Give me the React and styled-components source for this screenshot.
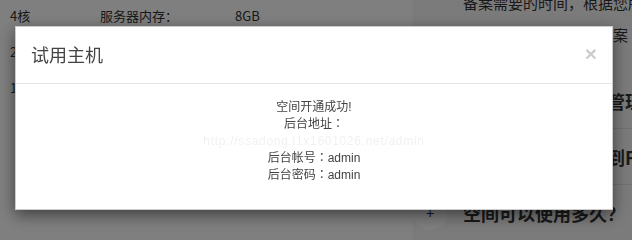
import React from "react";
import styled, { createGlobalStyle } from "styled-components";

const GlobalStyle = createGlobalStyle`
  html, body { margin: 0; padding: 0; background: #fff; overflow: hidden; }
  body { font-family: "Liberation Sans", "Noto Sans CJK SC", sans-serif; color: #333; }
  * { box-sizing: border-box; }
`;

const Page = styled.div`
  display: grid;
  grid-template-columns: 413px 1fr;
  height: 240px;
  overflow: hidden;
  background: #fff;
`;

const SpecTable = styled.div`
  display: flex;
  flex-direction: column;
  margin-top: -3px;
  padding-left: 10px;
`;

const SpecRow = styled.div`
  display: grid;
  grid-template-columns: 90px 135px 1fr;
  height: 36px;
  align-items: center;
  font-size: 13px;
  color: #333;
  font-family: "Noto Sans CJK SC", sans-serif;
`;

const FaqColumn = styled.div`
  display: flex;
  flex-direction: column;
  overflow: hidden;
  background: #f7f7f7;
`;

const Answer = styled.div`
  margin: -13px 0 22px 50px;
  font-size: 15px;
  line-height: 32px;
  color: #333;
  white-space: nowrap;
  font-family: "Noto Sans CJK SC", sans-serif;
`;

const AnswerLine = styled.div``;

const FaqItem = styled.div`
  display: flex;
  align-items: center;
  gap: 16px;
  height: 56px;
  flex: none;
  border-bottom: 1px solid ${(p) => (p.$last ? "#f7f7f7" : "#e2e2e2")};
  white-space: nowrap;
`;

const PlusCircle = styled.span`
  flex: none;
  width: 34px;
  height: 34px;
  border-radius: 50%;
  background: #fff;
  display: flex;
  align-items: center;
  justify-content: center;
  font-size: 14px;
  color: #1a2a66;
  font-family: "Liberation Sans", sans-serif;
`;

const Question = styled.span`
  font-size: 18px;
  font-weight: 700;
  color: #333;
  font-family: "Noto Sans CJK SC", sans-serif;
`;

const Backdrop = styled.div`
  position: fixed;
  inset: 0;
  background: rgba(0, 0, 0, 0.5);
  padding: 26px 0 0 15px;
`;

const Dialog = styled.div`
  width: 598px;
  background: #fff;
  border: 1px solid rgba(0, 0, 0, 0.2);
  box-shadow: 0 5px 15px rgba(0, 0, 0, 0.5);
`;

const Header = styled.div`
  display: flex;
  align-items: center;
  justify-content: space-between;
  padding: 15px;
  border-bottom: 1px solid #e5e5e5;
`;

const Title = styled.h4`
  margin: 0;
  font-size: 18px;
  font-weight: 400;
  line-height: 1.42857;
  color: #444;
  font-family: "Noto Sans CJK SC", sans-serif;
`;

const Close = styled.button`
  padding: 0;
  margin-top: -2px;
  border: 0;
  background: none;
  font-family: "Liberation Sans", sans-serif;
  font-size: 21px;
  font-weight: 700;
  line-height: 1;
  color: #000;
  opacity: 0.2;
  cursor: pointer;
`;

const Body = styled.div`
  padding: 15px;
`;

const Message = styled.div`
  margin: 0 0 10px;
  text-align: center;
  font-size: 12px;
  color: #444;
  font-family: "Liberation Sans", "Noto Sans CJK SC", sans-serif;
`;

const Line = styled.div`
  height: 17.15px;
  line-height: 17.15px;
  overflow: visible;
  white-space: nowrap;
  color: ${(p) => (p.$faint ? "#f1f1f1" : "inherit")};
  letter-spacing: ${(p) => (p.$faint ? "0.7px" : "normal")};
`;

const Colon = styled.span`
  font-family: "Noto Sans CJK TC", sans-serif;
  line-height: 1;
`;

const specs = [
  ["4核", "服务器内存：", "8GB"],
  ["20GB", "硬盘空间：", "100GB"],
  ["1个", "数据库：", "MySQL"],
];

const faqs = ["如何进入空间后台管理？", "如何上传网站程序到FTP？", "空间可以使用多久？"];

export default function App() {
  return (
    <>
      <GlobalStyle />
      <Page>
        <SpecTable>
          {specs.map((r, i) => (
            <SpecRow key={i}>
              <span>{r[0]}</span>
              <span>{r[1]}</span>
              <span>{r[2]}</span>
            </SpecRow>
          ))}
        </SpecTable>
        <FaqColumn>
          <Answer>
            <AnswerLine>备案需要的时间，根据您所在地区管局的规定</AnswerLine>
            <AnswerLine>局规定，请耐心等待备案</AnswerLine>
          </Answer>
          {faqs.map((q, i) => (
            <FaqItem key={q} $last={i === faqs.length - 1}>
              <PlusCircle>+</PlusCircle>
              <Question>{q}</Question>
            </FaqItem>
          ))}
        </FaqColumn>
      </Page>
      <Backdrop>
        <Dialog>
          <Header>
            <Title>试用主机</Title>
            <Close aria-label="关闭">×</Close>
          </Header>
          <Body>
            <Message>
              <Line>空间开通成功!</Line>
              <Line>后台地址<Colon>：</Colon></Line>
              <Line $faint>http://ssadong.l1x1601026.net/admin</Line>
              <Line>后台帐号<Colon>：</Colon>admin</Line>
              <Line>后台密码<Colon>：</Colon>admin</Line>
            </Message>
          </Body>
        </Dialog>
      </Backdrop>
    </>
  );
}
